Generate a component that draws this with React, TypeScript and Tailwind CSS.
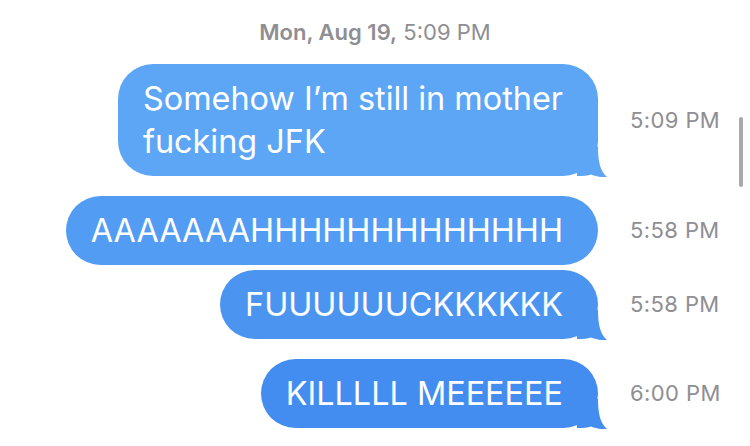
import React from "react"

type Msg = {
  text: React.ReactNode
  time: string
  bg: string
  fill: string
  tail: boolean
  gap: string
}

const messages: Msg[] = [
  {
    text: (
      <>
        Somehow I’m still in mother
        <br />
        fucking JFK
      </>
    ),
    time: "5:09 PM",
    bg: "bg-[#5ca6f5]",
    fill: "#5ca6f5",
    tail: true,
    gap: "mt-0",
  },
  { text: "AAAAAAAHHHHHHHHHHHHH", time: "5:58 PM", bg: "bg-[#529df3]", fill: "#529df3", tail: false, gap: "mt-[20px]" },
  { text: "FUUUUUUCKKKKKK", time: "5:58 PM", bg: "bg-[#4b95f1]", fill: "#4b95f1", tail: true, gap: "mt-[5px]" },
  { text: "KILLLLL MEEEEEE", time: "6:00 PM", bg: "bg-[#438cf0]", fill: "#438cf0", tail: true, gap: "mt-[20px]" },
]

function Tail({ fill }: { fill: string }) {
  return (
    <svg
      className="absolute right-[-9px] bottom-[-1px]"
      width="30"
      height="30"
      viewBox="0 0 30 30"
    >
      <path
        d="M0 0 L21 0 C21 14 23 24 30 30 C25 30.5 19 29.5 14 27.5 C11 28.8 6 29 0 29 Z"
        fill={fill}
      />
    </svg>
  )
}

export default function App() {
  return (
    <div className="relative w-[750px] h-[446px] overflow-hidden bg-white font-['Inter',sans-serif]">
      <div className="h-[64px] pt-[19px] text-center text-[22px] leading-[26px] text-[#8e8e93]">
        <span className="font-semibold">Mon, Aug 19,</span> 5:09 PM
      </div>

      {messages.map((m, i) => (
        <div key={i} className={`flex items-center ${m.gap}`}>
          <div className="w-[608px] flex justify-end pr-[10px]">
            <div
              className={`relative rounded-[35px] pl-[25px] pr-[35px] py-[13px] text-[32.4px] leading-[43px] text-white whitespace-nowrap ${m.bg}`}
            >
              {m.text}
              {m.tail && <Tail fill={m.fill} />}
            </div>
          </div>
          <div className="ml-[22px] text-[22px] tracking-[0.4px] text-[#8e8e93]">{m.time}</div>
        </div>
      ))}

      <div className="absolute left-[739px] top-[117px] w-[4px] h-[70px] rounded-full bg-[#a9a9a9]" />
    </div>
  )
}
